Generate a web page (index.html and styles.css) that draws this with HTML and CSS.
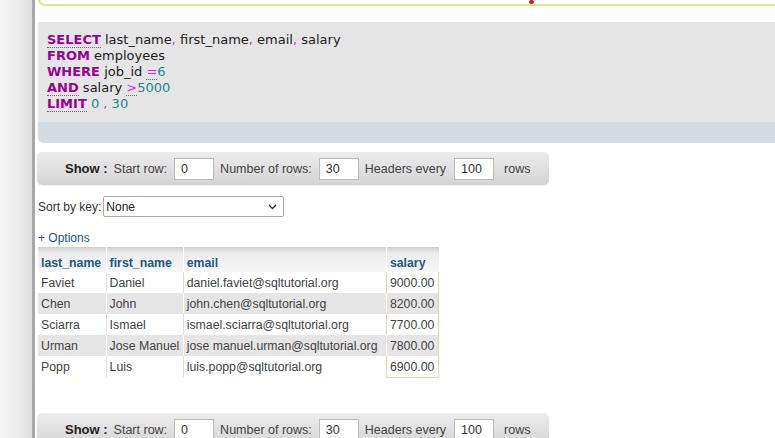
FILE: index.html
```html
<!DOCTYPE html>
<html>
<head>
<meta charset="utf-8">
<link rel="stylesheet" href="styles.css">
</head>
<body>
<div class="page">
  <div class="sidebar"></div>
  <div class="main">
    <div class="notice"><span class="dot"></span></div>
    <div class="sqlbox">
      <div class="sql">
        <div><span class="kw u">SELECT</span> last_name<span class="p">,</span> first_name<span class="p">,</span> email<span class="p">,</span> salary</div>
        <div><span class="kw">FROM</span> employees</div>
        <div><span class="kw">WHERE</span> job_id <span class="p u">=</span><span class="n">6</span></div>
        <div><span class="kw u">AND</span> salary <span class="p u">&gt;</span><span class="n">5000</span></div>
        <div><span class="kw u">LIMIT</span> <span class="n">0</span> <span class="p">,</span> <span class="n">30</span></div>
      </div>
      <div class="sqlfoot"></div>
    </div>

    <div class="showbar">
      <b class="show">Show :</b>
      <span>Start row:</span>
      <span class="inp">0</span>
      <span>Number of rows:</span>
      <span class="inp">30</span>
      <span>Headers every</span>
      <span class="inp">100</span>
      <span class="rows">rows</span>
    </div>

    <div class="sortrow">
      <span>Sort by key:</span>
      <span class="select">None<svg class="chev" width="9" height="6" viewBox="0 0 9 6"><path d="M1 1 L4.5 4.5 L8 1" fill="none" stroke="#333" stroke-width="1.3"/></svg></span>
    </div>

    <div class="options">+ Options</div>

    <table class="results">
      <thead>
        <tr><th class="c1">last_name</th><th class="c2">first_name</th><th class="c3">email</th><th class="c4">salary</th></tr>
      </thead>
      <tbody>
        <tr class="odd"><td>Faviet</td><td>Daniel</td><td>daniel.faviet@sqltutorial.org</td><td class="cond">9000.00</td></tr>
        <tr class="even"><td>Chen</td><td>John</td><td>john.chen@sqltutorial.org</td><td class="cond">8200.00</td></tr>
        <tr class="odd"><td>Sciarra</td><td>Ismael</td><td>ismael.sciarra@sqltutorial.org</td><td class="cond">7700.00</td></tr>
        <tr class="even"><td>Urman</td><td>Jose Manuel</td><td>jose manuel.urman@sqltutorial.org</td><td class="cond">7800.00</td></tr>
        <tr class="odd last"><td>Popp</td><td>Luis</td><td>luis.popp@sqltutorial.org</td><td class="cond">6900.00</td></tr>
      </tbody>
    </table>

    <div class="showbar bottom">
      <b class="show">Show :</b>
      <span>Start row:</span>
      <span class="inp">0</span>
      <span>Number of rows:</span>
      <span class="inp">30</span>
      <span>Headers every</span>
      <span class="inp">100</span>
      <span class="rows">rows</span>
    </div>
  </div>
</div>
</body>
</html>
```

FILE: styles.css
```css
html, body {
  margin: 0;
  padding: 0;
  background: #fff;
  overflow: hidden;
}
body {
  width: 775px;
  height: 438px;
  font-family: "Liberation Sans", Arial, sans-serif;
  font-size: 12px;
  color: #333;
}
.page {
  display: flex;
  height: 438px;
}
.sidebar {
  width: 32px;
  flex: none;
  background: linear-gradient(to right, #f6f6f6 0%, #ebebeb 60%, #dddddd 100%);
  border-right: 3px solid #a8a8a8;
}
.main {
  flex: 1;
  padding-left: 3px;
  min-width: 0;
}
.notice {
  position: relative;
  height: 5px;
  border: 2px solid #d4eb8c;
  border-top: none;
  border-radius: 0 0 0 7px;
  margin-right: -4px;
  margin-top: -1px;
}
.dot {
  position: absolute;
  left: 489px;
  top: 1px;
  width: 5px;
  height: 4px;
  border-radius: 2px;
  background: #d71920;
}
.sqlbox {
  margin-top: 16px;
  background: #e5e5e5;
  border-radius: 0 0 0 6px;
  overflow: hidden;
}
.sql {
  padding: 10px 9px 10px 9px;
  font-family: "DejaVu Sans", Verdana, sans-serif;
  font-size: 13px;
  line-height: 16px;
  color: #222;
}
.kw { color: #990099; font-weight: bold; }
.p { color: #ee22ee; }
.n { color: #1a8a8a; }
.u { border-bottom: 1px dotted #666; }
.sqlfoot {
  height: 21px;
  background: #d4dce3;
}
.showbar {
  margin-top: 9px;
  margin-left: -1px;
  width: 512px;
  height: 33px;
  box-sizing: border-box;
  border-radius: 5px;
  background: linear-gradient(to bottom, #ececec 0%, #dedede 60%, #d3d3d3 100%);
  box-shadow: 0 1px 1px rgba(0,0,0,0.08);
  display: flex;
  align-items: center;
  padding-left: 28px;
  font-size: 12.5px;
  color: #444;
}
.showbar .show {
  font-weight: bold;
  font-size: 13px;
  color: #222;
  margin-right: 6px;
}
.showbar .inp {
  width: 40px;
  height: 22px;
  box-sizing: border-box;
  background: #fff;
  border: 1px solid #bbb;
  padding-left: 6px;
  line-height: 20px;
  color: #333;
  margin: 0 6px 0 7px;
}
.showbar .inp:nth-of-type(6) { margin-left: 8px; margin-right: 9px; }
.showbar .rows { margin-left: 1px; }
.showbar.bottom { margin-top: 35px; }
.sortrow {
  margin-top: 11px;
  display: flex;
  align-items: center;
  color: #333;
  font-size: 12px;
}
.select {
  margin-left: 2px;
  width: 181px;
  height: 21px;
  box-sizing: border-box;
  border: 1px solid #aaa;
  border-radius: 2px;
  background: #fff;
  display: flex;
  align-items: center;
  padding-left: 2px;
  position: relative;
  color: #222;
}
.chev {
  position: absolute;
  right: 6px;
  top: 7px;
}
.options {
  margin-top: 14px;
  color: #235a81;
  font-size: 12px;
  line-height: 15px;
}
.results {
  margin-top: 1px;
  border-collapse: collapse;
  table-layout: fixed;
  width: 401px;
  font-size: 12.3px;
  color: #444;
}
.results th {
  height: 25px;
  box-sizing: border-box;
  padding: 6px 3px 0 3px;
  text-align: left;
  color: #235a81;
  font-weight: bold;
  background: linear-gradient(to bottom, #cfcfcf 0%, #ececec 25%, #f6f6f6 100%);
  border-left: 1px solid #fff;
  white-space: nowrap;
  overflow: hidden;
}
.results th.c1 { border-left: none; }
.results td {
  height: 21px;
  padding: 0 3px;
  border-left: 1px solid #e0e0e0;
  white-space: nowrap;
  overflow: hidden;
}
.results tr.even td { background: #e5e5e5; border-left-color: #fff; }
.results tr td:first-child { border-left: none; }
.c1 { width: 68px; }
.c2 { width: 77px; }
.c3 { width: 203px; }
.c4 { width: 52px; }
.results td.cond {
  border-left: 1px solid #f0d0a8;
  border-right: 1px solid #f0d0a8;
  padding-left: 3px;
}
.results tr.last td.cond { border-bottom: 1px solid #f0d0a8; }
```
